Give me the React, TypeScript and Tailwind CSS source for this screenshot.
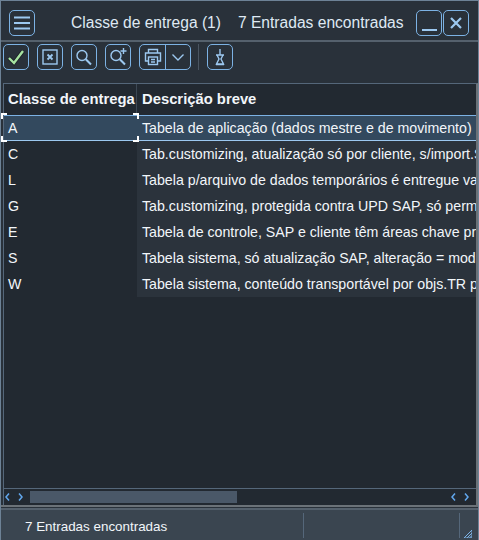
const ROWS = [
  ["A", "Tabela de aplicação (dados mestre e de movimento)"],
  ["C", "Tab.customizing, atualização só por cliente, s/import.SAP"],
  ["L", "Tabela p/arquivo de dados temporários é entregue vazia"],
  ["G", "Tab.customizing, protegida contra UPD SAP, só permitido INS"],
  ["E", "Tabela de controle, SAP e cliente têm áreas chave próprias"],
  ["S", "Tabela sistema, só atualização SAP, alteração = modificação"],
  ["W", "Tabela sistema, conteúdo transportável por objs.TR próprios"],
];

const stroke = { fill: "none", stroke: "#9cc8f0", strokeWidth: 1.4 };

function ToolButton({ children }: { children: React.ReactNode }) {
  return (
    <div className="flex h-[26px] w-[26px] shrink-0 items-center justify-center rounded-[5px] border border-[#7cb2e4]">
      {children}
    </div>
  );
}

function Search({ plus }: { plus?: boolean }) {
  return (
    <svg width="20" height="20" viewBox="0 0 20 20" {...stroke}>
      <circle cx="8" cy="8.5" r="5" />
      <path d="M11.8 12.3 L17 17.5" strokeWidth="2" />
      {plus && <path d="M15.5 1 V7 M12.5 4 H18.5" />}
    </svg>
  );
}

function Chevrons() {
  return (
    <svg width="18" height="8" viewBox="0 0 18 8" fill="none" stroke="#62a8ee" strokeWidth="1.5">
      <path d="M4 0.5 L1 4 L4 7.5 M14 0.5 L17 4 L14 7.5" />
    </svg>
  );
}

function Corner({ className }: { className: string }) {
  return <div className={"absolute h-[6px] w-[6px] border-white " + className} />;
}

export default function App() {
  return (
    <div className="flex h-[540px] w-[479px] flex-col overflow-hidden border-x border-t border-[#6d8296] bg-[#29313a] font-['Liberation_Sans',sans-serif] text-[14.2px] text-[#f2f6fa]">
      <div className="flex h-[41px] shrink-0 items-center border-b-2 border-[#55616d] pt-[4px] pr-[9px] pl-[8px]">
        <div className="flex h-[26px] w-[26px] items-center justify-center rounded-[5px] border border-[#7cb2e4]">
          <svg width="18" height="16" viewBox="0 0 18 16" fill="none" stroke="#9cc8f0" strokeWidth="2">
            <path d="M1 2.5 H17 M1 8 H17 M1 13.5 H17" />
          </svg>
        </div>
        <span className="ml-[36px] text-[15.6px] text-[#dfe9f3]">Classe de entrega (1)</span>
        <span className="ml-[17px] text-[15.6px] text-[#dfe9f3]">7 Entradas encontradas</span>
        <div className="ml-auto flex">
          <div className="flex h-[26px] w-[26px] items-end justify-center rounded-[5px] border border-[#7cb2e4] pb-[4px]">
            <div className="h-[2px] w-[15px] bg-[#9cc8f0]" />
          </div>
          <div className="ml-[1px] flex h-[26px] w-[26px] items-center justify-center rounded-[5px] border border-[#7cb2e4]">
            <svg width="14" height="14" viewBox="0 0 14 14" fill="none" stroke="#9cc8f0" strokeWidth="2.2">
              <path d="M2 2 L12 12 M12 2 L2 12" />
            </svg>
          </div>
        </div>
      </div>

      <div className="flex h-[41px] shrink-0 items-start gap-[8px] pt-[2px] pl-[2px]">
        <ToolButton>
          <svg width="20" height="20" viewBox="0 0 20 20" fill="none">
            <path d="M3 11 L8 16 L17 4" stroke="#1b2026" strokeWidth="4" />
            <path d="M3 11 L8 16 L17 4" stroke="#a6e3a1" strokeWidth="2.4" />
          </svg>
        </ToolButton>
        <ToolButton>
          <svg width="18" height="18" viewBox="0 0 18 18" {...stroke}>
            <rect x="2" y="2" width="14" height="14" />
            <path d="M6.5 6.5 L11.5 11.5 M11.5 6.5 L6.5 11.5" strokeWidth="1.8" />
          </svg>
        </ToolButton>
        <ToolButton>
          <Search />
        </ToolButton>
        <ToolButton>
          <Search plus />
        </ToolButton>
        <div className="flex h-[26px] w-[52px] shrink-0 rounded-[5px] border border-[#7cb2e4]">
          <div className="flex w-[26px] items-center justify-center border-r border-[#7cb2e4]">
            <svg width="18" height="18" viewBox="0 0 18 18" {...stroke}>
              <path d="M4.5 5 V1.5 H13.5 V5 M4.5 13 H1.5 V5 H16.5 V13 H13.5" />
              <rect x="4.5" y="9" width="9" height="7.5" />
              <path d="M7 11.5 H11 M7 14 H11" />
            </svg>
          </div>
          <div className="flex flex-1 items-center justify-center">
            <svg width="14" height="14" viewBox="0 0 14 14" {...stroke}>
              <path d="M1.5 4.5 L7 10 L12.5 4.5" />
            </svg>
          </div>
        </div>
        <div className="ml-[-1px] h-[26px] w-px bg-[#4a5561]" />
        <ToolButton>
          <svg width="18" height="18" viewBox="0 0 18 18" {...stroke}>
            <path d="M9 1 V7 M5 7 H13 M6 7 L8 11 L5.5 16 H12.5 L10 11 L12 7 M5 16.5 H13" />
          </svg>
        </ToolButton>
      </div>

      <div className="ml-[2px] flex min-h-0 flex-1 flex-col border-t border-r-2 border-l border-t-[#55677a] border-r-[#6b7278] border-l-[#55677a] bg-[#222931]">
        <div className="flex h-[32px] shrink-0 items-center border-b border-[#7cb2e4] text-[14.8px] font-bold">
          <div className="flex h-full w-[133px] shrink-0 items-center border-r border-[#3d4854] pl-[4px] whitespace-nowrap">
            Classe de entrega
          </div>
          <div className="pl-[5px]">Descrição breve</div>
        </div>
        <div className="flex-1">
          {ROWS.map(([key, text], i) => (
            <div
              key={key}
              className={
                i === 0
                  ? "flex h-[25px] items-center border-b border-[#9cc8f0] bg-[#33495e]"
                  : "flex h-[26px] items-center"
              }
            >
              <div className="relative flex h-full w-[133px] shrink-0 items-center pt-[2px] pl-[4px]">
                {key}
                {i === 0 && (
                  <>
                    <Corner className="top-[-3px] left-[-3px] border-t-2 border-l-2" />
                    <Corner className="top-[-3px] right-[-2px] border-t-2 border-r-2" />
                    <Corner className="bottom-[-2px] left-[-3px] border-b-2 border-l-2" />
                    <Corner className="right-[-2px] bottom-[-2px] border-r-2 border-b-2" />
                  </>
                )}
              </div>
              <div
                className={
                  i === 0
                    ? "flex h-full min-w-0 flex-1 items-center overflow-hidden pt-[2px] pl-[5px] whitespace-nowrap"
                    : "flex h-full min-w-0 flex-1 items-center overflow-hidden bg-[#2b333c] pt-[2px] pl-[5px] whitespace-nowrap"
                }
              >
                {text}
              </div>
            </div>
          ))}
        </div>
        <div className="flex h-[17px] shrink-0 items-center border-t border-[#55677a]">
          <div className="w-[26px] pl-[1px]">
            <Chevrons />
          </div>
          <div className="h-[12px] w-[207px] bg-[#4a5868]" />
          <div className="ml-auto pr-[7px]">
            <Chevrons />
          </div>
        </div>
      </div>

      <div className="h-[2px] shrink-0 bg-[#6b7278]" />
      <div className="mt-[1px] flex h-[32px] shrink-0 items-stretch border-t-2 border-[#55616d] bg-[#3a4550] pt-[3px] pb-[2px] text-[13.4px]">
        <span className="ml-[24px] flex w-[278px] items-center pt-[3px]">7 Entradas encontradas</span>
        <div className="w-px bg-[#55677a]" />
        <div className="w-[155px]" />
        <div className="w-px bg-[#55677a]" />
        <div className="flex flex-1 items-end justify-end pr-[6px]">
          <svg width="8" height="8" viewBox="0 0 8 8" fill="none" stroke="#7cb2e4" strokeWidth="1">
            <path d="M0 8 L8 0 V8 Z M3 8 L8 3 M5.5 8 L8 5.5" />
          </svg>
        </div>
      </div>
    </div>
  );
}
